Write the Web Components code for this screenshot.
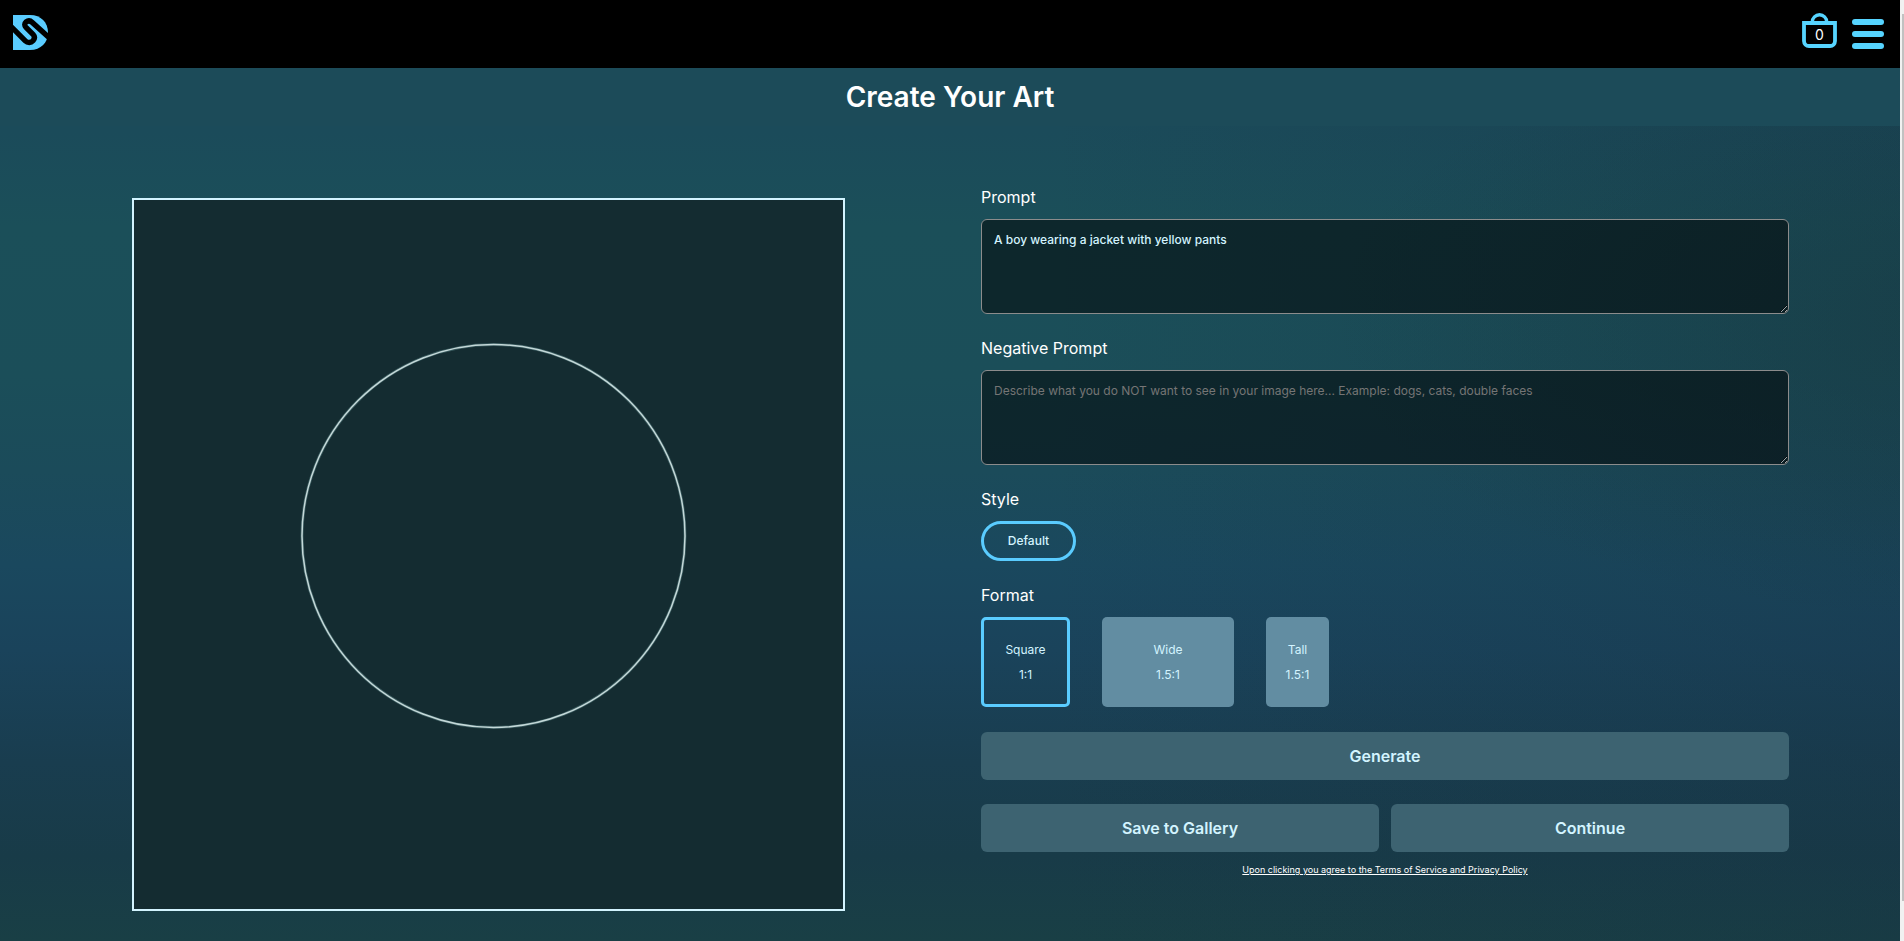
<!DOCTYPE html>
<html lang="en">
<head>
<meta charset="utf-8">
<title>Create Your Art</title>
<style>
  html, body { margin: 0; }
  body {
    min-height: 100vh;
    font-family: Inter, "Liberation Sans", sans-serif;
    color: #fff;
    --accent: #5accff;
    --ice: #d3f4ff;
  }
</style>
</head>
<body>
<art-app></art-app>

<script>
const define = (name, html, setup) => {
  const template = document.createElement("template");
  template.innerHTML = html;
  customElements.define(name, class extends HTMLElement {
    constructor() {
      super();
      this.attachShadow({ mode: "open" }).append(template.content.cloneNode(true));
    }
    connectedCallback() { if (setup) setup(this, this.shadowRoot); }
  });
};

define("site-header", `
  <style>
    :host { display: flex; align-items: center; justify-content: space-between; height: 68px; padding: 0 16px 0 13px; box-sizing: border-box; background: #000; }
    nav { display: flex; align-items: center; gap: 15px; }
    a, button { display: block; padding: 0; border: 0; background: none; color: #fff; font: inherit; cursor: pointer; }
    svg { display: block; }
    .home { margin-bottom: 4px; }
    .bag { position: relative; margin-bottom: 8px; }
    .count { position: absolute; inset: 12px 0 0; text-align: center; font-size: 14px; line-height: 20px; }
  </style>
  <a class="home" href="#" aria-label="Home">
    <svg width="35" height="35" viewBox="0 0 35 35">
      <path d="M0 0H17C28 0 35 7.500 35 17.500C35 27.500 28 35 17 35H0Z" fill="#5accff"/>
      <path d="M-2 11.500L12.300 25.800C14.500 28 18 28 20 25.800C21.800 23.700 21.800 21.300 20 19.300L13 12.300C11.300 10.500 11.300 8.500 13 7C15 5.500 17.500 5.800 19.300 7.500L37 23.500" fill="none" stroke="#000" stroke-width="5.400"/>
    </svg>
  </a>
  <nav>
    <a class="bag" href="#" aria-label="Cart">
      <svg width="35" height="35" viewBox="0 0 35 35" fill="none" stroke="#56d4ff">
        <path d="M10.300 9.500V9A7.200 7.200 0 0 1 24.700 9V9.500" stroke-width="3.400"/>
        <path d="M2 10H33V28A5 5 0 0 1 28 33H7A5 5 0 0 1 2 28Z" stroke-width="3.800"/>
      </svg>
      <span class="count">0</span>
    </a>
    <button aria-label="Menu">
      <svg width="32" height="30" viewBox="0 0 32 30" fill="#56d4ff">
        <rect width="32" height="6" rx="3"/><rect y="12" width="32" height="6" rx="3"/><rect y="24" width="32" height="6" rx="3"/>
      </svg>
    </button>
  </nav>`);

define("page-title", `
  <style>
    :host { display: block; background: #1c4b59; }
    h1 { margin: 0; text-align: center; font-size: 28px; font-weight: 600; line-height: 58px; }
  </style>
  <h1><slot></slot></h1>`);

define("art-canvas", `
  <style>
    :host { display: block; box-sizing: border-box; aspect-ratio: 1; border: 2px solid var(--ice); background: #142c31; }
    svg { display: block; width: 100%; height: 100%; }
  </style>
  <svg viewBox="0 0 709 709" aria-hidden="true">
    <circle cx="359.500" cy="336" r="191.500" fill="none" stroke="#4f7779" stroke-opacity=".6" stroke-width="3"/>
    <circle cx="359.500" cy="336" r="191.500" fill="none" stroke="#c4d8d8" stroke-width="1.500"/>
  </svg>`);

define("prompt-field", `
  <style>
    :host { display: flex; flex-direction: column; gap: 10px; }
    label { font-size: 16px; line-height: 24px; }
    textarea { display: block; box-sizing: border-box; width: 100%; height: 95px; margin: 0; padding: 12px; border: 1px solid #8c8c8c; border-radius: 6px; background: rgba(0,0,0,.5); color: var(--ice); font: 500 12px/16px Inter, "Liberation Sans", sans-serif; resize: vertical; outline: 0; }
    textarea::placeholder { color: #757575; font-weight: 400; opacity: 1; }
  </style>
  <label for="text"></label>
  <textarea id="text"></textarea>`, (host, root) => {
    root.querySelector("label").textContent = host.getAttribute("label");
    const area = root.querySelector("textarea");
    area.placeholder = host.getAttribute("placeholder") || "";
    area.value = host.getAttribute("value") || "";
  });

define("option-group", `
  <style>
    :host { display: flex; flex-direction: column; gap: 10px; }
    h2 { margin: 0; font-size: 16px; font-weight: 400; line-height: 24px; }
    div { display: flex; align-items: flex-start; gap: 32px; }
  </style>
  <h2></h2>
  <div role="group"><slot></slot></div>`, (host, root) => {
    root.querySelector("h2").textContent = host.getAttribute("label");
    root.querySelector("div").setAttribute("aria-label", host.getAttribute("label"));
  });

define("style-pill", `
  <style>
    :host { display: block; }
    button { display: block; box-sizing: border-box; height: 40px; min-width: 95px; padding: 0 20px; border: 3px solid var(--accent); border-radius: 20px; background: none; color: var(--ice); font: 500 12px/16px Inter, "Liberation Sans", sans-serif; }
  </style>
  <button aria-pressed="true"><slot></slot></button>`);

define("format-tile", `
  <style>
    :host { display: block; width: 89px; height: 90px; }
    :host([shape="wide"]) { width: 132px; }
    :host([shape="tall"]) { width: 63px; }
    button { display: block; box-sizing: border-box; width: 100%; height: 100%; padding: 0; border: 0; border-radius: 5px; background: #628da2; color: var(--ice); font: 400 12px/25px Inter, "Liberation Sans", sans-serif; }
    :host([selected]) button { border: 3px solid var(--accent); background: none; }
    span { display: block; }
  </style>
  <button><span><slot></slot></span><span class="ratio"></span></button>`, (host, root) => {
    root.querySelector(".ratio").textContent = host.getAttribute("ratio");
    root.querySelector("button").setAttribute("aria-pressed", host.hasAttribute("selected"));
  });

define("action-button", `
  <style>
    :host { display: block; flex: 1; }
    button { display: block; width: 100%; height: 48px; padding: 0; border: 0; border-radius: 6px; background: #3d6371; color: var(--ice); font: 600 16px/24px Inter, "Liberation Sans", sans-serif; }
  </style>
  <button><slot></slot></button>`);

define("art-form", `
  <style>
    :host { display: flex; flex-direction: column; gap: 25px; }
    .fields { display: flex; flex-direction: column; gap: 22px; }
    .row { display: flex; gap: 12px; }
    .actions { display: flex; flex-direction: column; gap: 24px; }
    .finish { display: flex; flex-direction: column; gap: 12px; }
    a { align-self: center; color: #fff; font-size: 9px; line-height: 12px; }
  </style>
  <div class="fields">
    <prompt-field label="Prompt" value="A boy wearing a jacket with yellow pants"></prompt-field>
    <prompt-field label="Negative Prompt" placeholder="Describe what you do NOT want to see in your image here... Example: dogs, cats, double faces"></prompt-field>
    <option-group label="Style"><style-pill>Default</style-pill></option-group>
    <option-group label="Format">
      <format-tile shape="square" ratio="1:1" selected>Square</format-tile>
      <format-tile shape="wide" ratio="1.5:1">Wide</format-tile>
      <format-tile shape="tall" ratio="1.5:1">Tall</format-tile>
    </option-group>
  </div>
  <div class="actions">
    <div class="row"><action-button>Generate</action-button></div>
    <div class="finish">
      <div class="row"><action-button>Save to Gallery</action-button><action-button>Continue</action-button></div>
      <a href="#">Upon clicking you agree to the Terms of Service and Privacy Policy</a>
    </div>
  </div>`);

define("scroll-rail", `
  <style>
    :host { display: flex; position: sticky; top: 0; box-sizing: border-box; flex: 0 0 4px; height: 100vh; padding: 14px 0 40px 2px; background: #f1f1f1; }
    i { flex: 1; background: #c1c1c1; }
  </style>
  <i></i>`);

define("art-app", `
  <style>
    :host { display: flex; align-items: flex-start; min-height: 100vh; }
    .page { flex: 1; min-width: 0; min-height: 100vh;
      background:
        radial-gradient(ellipse 34% 32% at 104% 34%, rgba(22,50,54,.34), rgba(22,50,54,0)),
        linear-gradient(90deg, rgba(22,48,66,0) 55%, rgba(22,48,66,.28) 100%),
        linear-gradient(180deg, #1b4b59 0%, #1b4b5a 14%, #1b4f59 24%, #1b4e59 40%, #1b4b5a 50%, #1a485e 60%, #1a435b 69%, #193d4f 81%, #183b48 91%, #193f45 100%); }
    main { display: grid; grid-template-columns: 713fr 808fr; column-gap: 136px; align-items: start; padding: 59px 111px 30px 132px; }
    art-canvas { margin-top: 13px; }
  </style>
  <div class="page">
    <site-header></site-header>
    <page-title>Create Your Art</page-title>
    <main><art-canvas></art-canvas><art-form></art-form></main>
  </div>
  <scroll-rail></scroll-rail>`);
</script>
</body>
</html>
